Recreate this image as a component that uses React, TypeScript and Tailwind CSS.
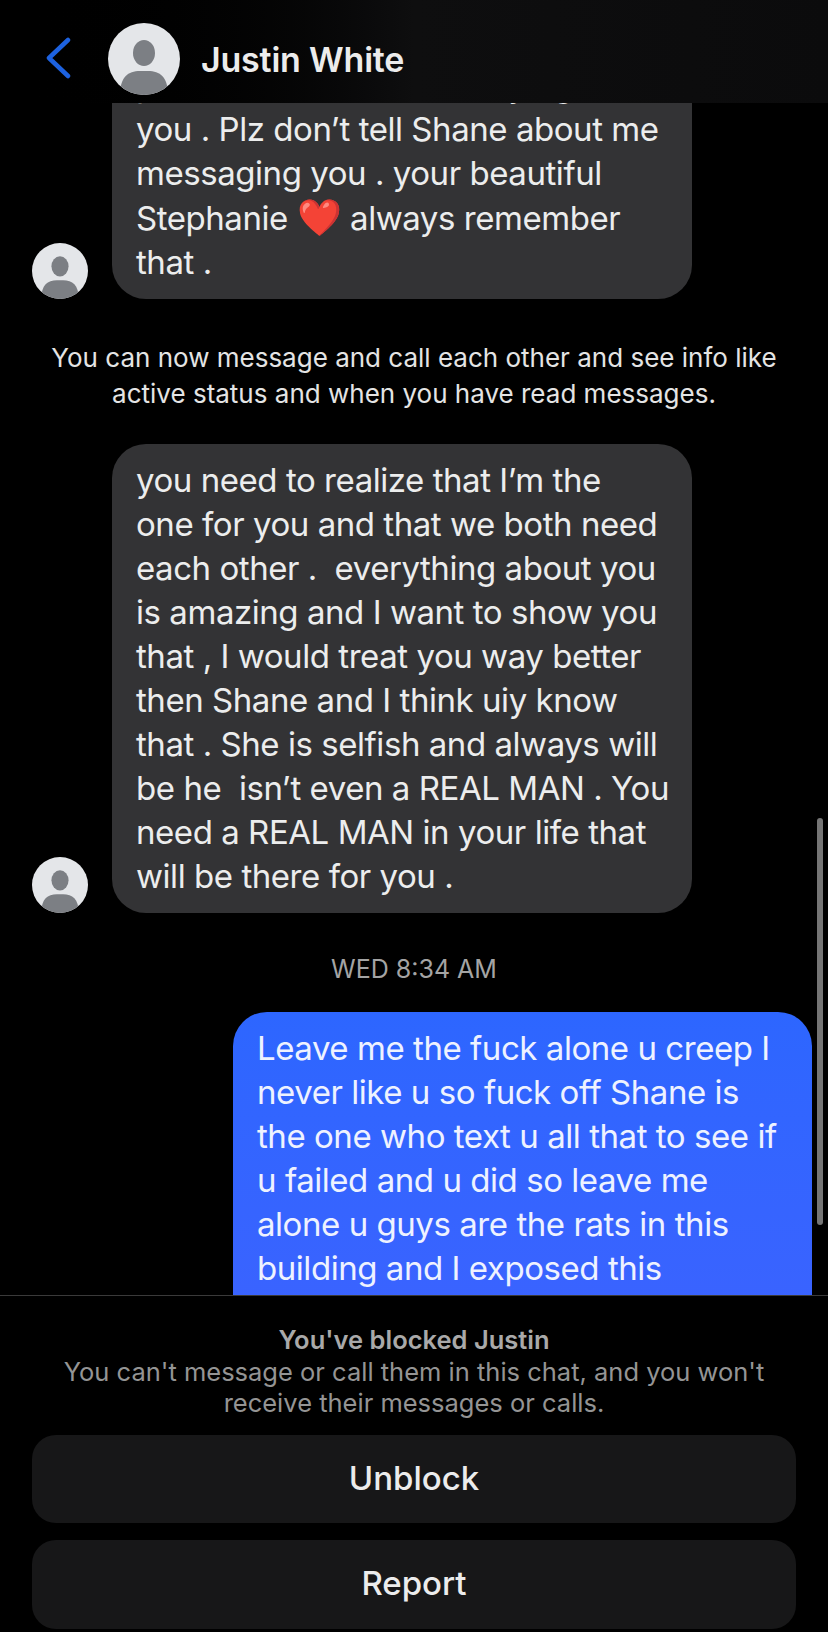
import React from 'react';

const Avatar = ({ size }: { size: 'sm' | 'lg' }) => (
  <div className={size === 'lg' ? 'w-[72px] h-[72px] shrink-0' : 'w-[56px] h-[56px] shrink-0'}>
    <svg viewBox="0 0 72 72" className="w-full h-full block">
      <defs>
        <clipPath id={`clip-${size}`}>
          <circle cx="36" cy="36" r="36" />
        </clipPath>
      </defs>
      <circle cx="36" cy="36" r="36" fill="#e4e6e9" />
      <g clipPath={`url(#clip-${size})`} fill="#7c7f84">
        <ellipse cx="36" cy="30" rx="11" ry="13" />
        <path d="M12 72 C12 54 20 48 32 48 L40 48 C52 48 60 54 60 72 Z" />
      </g>
    </svg>
  </div>
);

const Bubble = ({ lines }: { lines: React.ReactNode[] }) => (
  <div className="w-[580px] ml-[24px] bg-[#333335] rounded-[34px] px-[24px] pt-[14px] pb-[15px] text-[#eceded] text-[33px] leading-[44px] tracking-[-0.45px] whitespace-pre">
    {lines.map((l, i) => (
      <div key={i}>{l}</div>
    ))}
  </div>
);

export default function App() {
  return (
    <div className="w-[828px] h-[1632px] bg-black flex flex-col overflow-hidden font-['Inter','Liberation_Sans',sans-serif]">
      <header className="h-[103px] shrink-0 bg-gradient-to-r from-black via-[#0e0e0f] to-[#0b0b0c] flex items-center pl-[44px]">
        <svg width="30" height="42" viewBox="0 0 30 42" className="mt-[13px] shrink-0">
          <path d="M24 3 L5 21 L24 39" fill="none" stroke="#1d62e0" strokeWidth="4.5" strokeLinecap="round" strokeLinejoin="round" />
        </svg>
        <div className="ml-[34px] mt-[15px]">
          <Avatar size="lg" />
        </div>
        <div className="ml-[21px] mt-[15px] text-[#ececec] text-[34px] font-semibold tracking-[-0.2px]">Justin White</div>
      </header>

      <main className="flex-1 relative overflow-hidden">
        <div className="-mt-[54px]">
          <div className="flex items-end pl-[32px]">
            <Avatar size="sm" />
            <Bubble
              lines={[
                <div className="flex">
                  <span>p</span>
                  <span className="ml-[330px]">trying</span>
                </div>,
                'you . Plz don’t tell Shane about me',
                'messaging you . your beautiful',
                <span>
                  Stephanie <span className="text-[36px]">❤️</span> always remember
                </span>,
                'that .',
              ]}
            />
          </div>

          <div className="mt-[41px] text-center text-[#e4e4e4] text-[26px] leading-[36px]">
            <div>You can now message and call each other and see info like</div>
            <div>active status and when you have read messages.</div>
          </div>

          <div className="mt-[32px] flex items-end pl-[32px]">
            <Avatar size="sm" />
            <Bubble
              lines={[
                'you need to realize that I’m the',
                'one for you and that we both need',
                'each other .  everything about you',
                'is amazing and I want to show you',
                'that , I would treat you way better',
                'then Shane and I think uiy know',
                'that . She is selfish and always will',
                'be he  isn’t even a REAL MAN . You',
                'need a REAL MAN in your life that',
                'will be there for you .',
              ]}
            />
          </div>

          <div className="mt-[41px] text-center text-[#a4a4a4] text-[25px] leading-[30px]">WED 8:34 AM</div>

          <div className="mt-[28px] flex justify-end pr-[16px]">
            <div className="w-[579px] bg-gradient-to-b from-[#2d66ff] to-[#3a63ff] rounded-t-[34px] px-[24px] pt-[14px] h-[300px] text-[#eef2ff] text-[33px] leading-[44px] tracking-[-0.45px] whitespace-pre">
              <div>Leave me the fuck alone u creep I</div>
              <div>never like u so fuck off Shane is</div>
              <div>the one who text u all that to see if</div>
              <div>u failed and u did so leave me</div>
              <div>alone u guys are the rats in this</div>
              <div>building and I exposed this</div>
            </div>
          </div>
        </div>
        <div className="absolute right-[5px] top-[715px] w-[6px] h-[407px] rounded-full bg-[#757575]" />
      </main>

      <footer className="h-[337px] shrink-0 border-t border-[#3a3a3a] px-[32px] flex flex-col">
        <div className="mt-[28px] text-center text-[#a9a9a9] text-[25.5px] leading-[31.5px]">
          <div className="font-semibold">You've blocked Justin</div>
          <div className="text-[#949494]">You can't message or call them in this chat, and you won't</div>
          <div className="text-[#949494]">receive their messages or calls.</div>
        </div>
        <button className="mt-[16px] h-[88px] rounded-[24px] bg-[#171718] text-[#ececec] text-[33px] font-medium">Unblock</button>
        <button className="mt-[17px] h-[89px] rounded-[24px] bg-[#171718] text-[#ececec] text-[33px] font-medium">Report</button>
      </footer>
    </div>
  );
}
